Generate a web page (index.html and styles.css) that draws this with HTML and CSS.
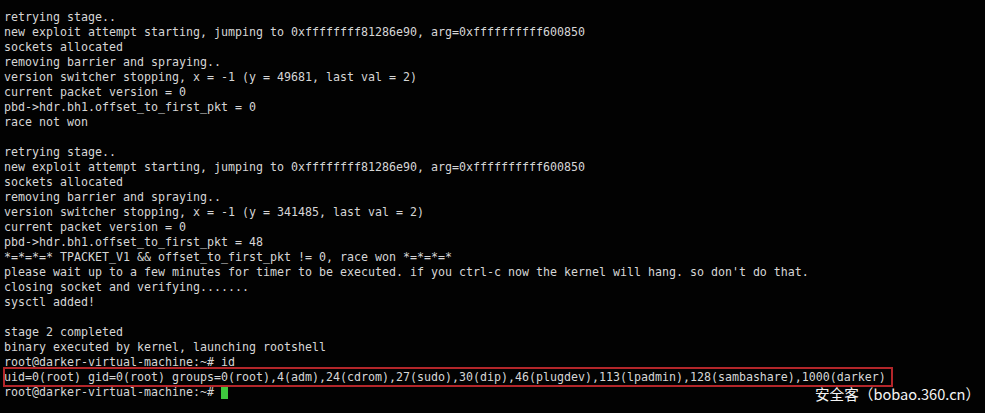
FILE: index.html
```html
<!DOCTYPE html>
<html>
<head>
<meta charset="utf-8">
<link rel="stylesheet" href="styles.css">
</head>
<body>
<div class="term">
<div class="line">retrying stage..</div>
<div class="line">new exploit attempt starting, jumping to 0xffffffff81286e90, arg=0xffffffffff600850</div>
<div class="line">sockets allocated</div>
<div class="line">removing barrier and spraying..</div>
<div class="line">version switcher stopping, x = -1 (y = 49681, last val = 2)</div>
<div class="line">current packet version = 0</div>
<div class="line">pbd-&gt;hdr.bh1.offset_to_first_pkt = 0</div>
<div class="line">race not won</div>
<div class="line"> </div>
<div class="line">retrying stage..</div>
<div class="line">new exploit attempt starting, jumping to 0xffffffff81286e90, arg=0xffffffffff600850</div>
<div class="line">sockets allocated</div>
<div class="line">removing barrier and spraying..</div>
<div class="line">version switcher stopping, x = -1 (y = 341485, last val = 2)</div>
<div class="line">current packet version = 0</div>
<div class="line">pbd-&gt;hdr.bh1.offset_to_first_pkt = 48</div>
<div class="line">*=*=*=* TPACKET_V1 &amp;&amp; offset_to_first_pkt != 0, race won *=*=*=*</div>
<div class="line">please wait up to a few minutes for timer to be executed. if you ctrl-c now the kernel will hang. so don't do that.</div>
<div class="line">closing socket and verifying.......</div>
<div class="line">sysctl added!</div>
<div class="line"> </div>
<div class="line">stage 2 completed</div>
<div class="line">binary executed by kernel, launching rootshell</div>
<div class="line">root@darker-virtual-machine:~# id</div>
<div class="line hl">uid=0(root) gid=0(root) groups=0(root),4(adm),24(cdrom),27(sudo),30(dip),46(plugdev),113(lpadmin),128(sambashare),1000(darker)</div>
<div class="line">root@darker-virtual-machine:~# <span class="cursor"></span></div>
</div>
<div class="mark">安全客（bobao.360.cn）</div>
</body>
</html>
```
FILE: styles.css
```css
html, body {
  margin: 0;
  padding: 0;
  background: #020202;
  width: 985px;
  height: 413px;
  overflow: hidden;
}
.term {
  padding: 10px 0 0 4px;
  font-family: "DejaVu Sans Mono", monospace;
  font-size: 11.64px;
  line-height: 15px;
  color: #d6d6d6;
}
.line {
  height: 15px;
  white-space: pre;
}
.hl {
  position: relative;
}
.hl::after {
  content: "";
  position: absolute;
  left: -1px;
  top: -3px;
  width: 886px;
  height: 16px;
  border: 2px solid #b3262a;
}
.cursor {
  display: inline-block;
  width: 7px;
  height: 13px;
  background: #3ec83e;
  vertical-align: -3px;
}
.mark {
  position: absolute;
  left: 815px;
  top: 384px;
  font-family: "Noto Sans CJK SC", sans-serif;
  font-size: 14.6px;
  line-height: 20px;
  color: #f4f4f4;
  white-space: nowrap;
}
```
